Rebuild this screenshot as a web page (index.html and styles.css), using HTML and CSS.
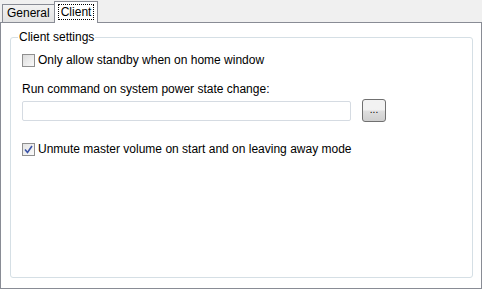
FILE: index.html
```html
<!DOCTYPE html>
<html lang="en">
<head>
    <meta charset="UTF-8">
    <title>Client</title>
    <link rel="stylesheet" href="styles.css">
</head>
<body>
    <div class="tabs">
        <div class="tab">General</div>
        <div class="tab active"><span class="focus">Client</span></div>
    </div>
    <div class="page">
        <fieldset class="group">
            <legend>Client settings</legend>
            <label class="check first">
                <span class="box"></span>
                Only allow standby when on home window
            </label>
            <div class="field-label">Run command on system power state change:</div>
            <div class="row">
                <div class="textbox"></div>
                <div class="btn">...</div>
            </div>
            <label class="check">
                <span class="box checked">
                    <svg width="9" height="9" viewBox="0 0 9 9"><path d="M1 4.5 L3.5 7.5 L8 1" fill="none" stroke="#3a53a8" stroke-width="1.6"/></svg>
                </span>
                Unmute master volume on start and on leaving away mode
            </label>
        </fieldset>
    </div>
</body>
</html>
```

FILE: styles.css
```css
*{
    margin: 0;
    box-sizing: border-box;
}
body{
    width: 482px;
    height: 289px;
    background: #f0f0f0;
    font-family: "Liberation Sans", Arial, sans-serif;
    font-size: 12px;
    color: #000;
    display: flex;
    flex-direction: column;
}
.tabs{
    display: flex;
    align-items: flex-end;
    height: 22px;
    padding-left: 2px;
}
.tab{
    height: 18px;
    padding: 1px 4px 0;
    border: 1px solid #898c95;
    border-bottom: none;
    background: linear-gradient(#f2f2f2, #e3e3e3);
}
.tab.active{
    height: 22px;
    background: #fff;
    margin-left: -1px;
    padding: 1px 3px 0;
    position: relative;
    top: 1px;
}
.focus{
    display: inline-block;
    border: 1px dotted #000;
    padding: 0 2px;
    line-height: 14px;
    margin-top: 1px;
}
.page{
    flex: 1;
    background: #fff;
    border: 1px solid #898c95;
    padding: 7px 8px 10px 9px;
}
.group{
    height: 100%;
    border: 1px solid #d5dfe5;
    border-radius: 3px;
    padding: 6px 11px 0;
}
legend{
    padding: 0 1px;
    margin-left: -4px;
}
.check{
    display: flex;
    align-items: center;
    gap: 3px;
    height: 16px;
}
.check.first{
    margin-top: 2px;
}
.box{
    width: 13px;
    height: 13px;
    border: 1px solid #8f8f8f;
    background: linear-gradient(135deg, #dcdcdc, #fafafa);
    display: flex;
    align-items: center;
    justify-content: center;
}
.box.checked{
    background: linear-gradient(135deg, #e4e4e4, #fafafa);
}
.field-label{
    margin-top: 14px;
}
.row{
    display: flex;
    align-items: center;
    gap: 11px;
    margin-top: 3px;
}
.textbox{
    width: 329px;
    height: 20px;
    border: 1px solid #d5dbe2;
    border-radius: 2px;
}
.btn{
    width: 24px;
    height: 23px;
    border: 1px solid #707070;
    border-radius: 3px;
    background: linear-gradient(#f2f2f2 45%, #dddddd 55%, #cfcfcf);
    display: flex;
    align-items: center;
    justify-content: center;
    font-size: 10px;
    padding-bottom: 2px;
}
.row + .check{
    margin-top: 19px;
}
```
